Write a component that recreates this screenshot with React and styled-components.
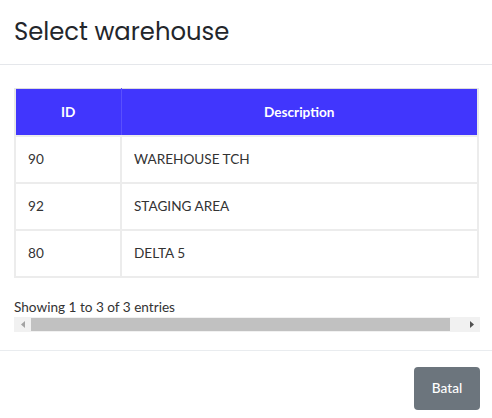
import React from "react";
import styled, { createGlobalStyle } from "styled-components";

const Global = createGlobalStyle`
  html, body { margin: 0; padding: 0; background: #fff; }
  body { font-family: Lato, "Liberation Sans", sans-serif; }
  * { box-sizing: border-box; }
`;

const Modal = styled.div`
  width: 492px;
  height: 418px;
  background: #fff;
  display: flex;
  flex-direction: column;
`;

const Header = styled.div`
  height: 65px;
  padding: 0 14px 2px;
  display: flex;
  align-items: center;
  border-bottom: 1px solid #e5e7eb;
`;

const Title = styled.h2`
  margin: 0;
  font-family: Poppins, Inter, "Open Sans", sans-serif;
  font-weight: 400;
  font-size: 24.3px;
  color: #23262b;
`;

const Body = styled.div`
  padding: 23px 13px 18px 14px;
  border-bottom: 1px solid #e9ecef;
`;

const Table = styled.table`
  width: 465px;
  border-collapse: collapse;
  border: 2px solid #e8e8e8;
  border-top: 1px solid #dcdcdc;
  font-size: 13.6px;
  color: #333;
`;

const Th = styled.th`
  background: #4136fd;
  color: #fff;
  font-weight: 700;
  height: 47px;
  padding: 0;
  text-align: center;
  border-left: 1px solid #5a50fd;
  &:first-child { border-left: none; width: 106px; }
`;

const Td = styled.td`
  height: 47px;
  padding: 0 12px;
  border: 2px solid #ececec;
  text-align: left;
`;

const Info = styled.div`
  margin-top: 21px;
  font-size: 13.6px;
  color: #333;
  line-height: 17px;
`;

const Scrollbar = styled.div`
  margin-top: 1px;
  width: 466px;
  height: 15px;
  background: #f1f1f1;
  display: flex;
  align-items: center;
`;

const Arrow = styled.div`
  width: 17px;
  height: 15px;
  display: flex;
  align-items: center;
  justify-content: center;
  color: ${(p) => (p.$active ? "#505050" : "#a3a3a3")};
`;

const Thumb = styled.div`
  flex: 1;
  height: 13px;
  background: #c1c1c1;
  margin-right: 13px;
`;

const Footer = styled.div`
  flex: 1;
  display: flex;
  justify-content: flex-end;
  align-items: flex-start;
  padding: 16px 12px 0 0;
`;

const Button = styled.button`
  width: 66px;
  height: 43px;
  border: none;
  border-radius: 4px;
  background: #6c757d;
  color: #fff;
  font-family: Lato, "Liberation Sans", sans-serif;
  font-size: 13.6px;
  font-weight: 500;
`;

const rows = [
  ["90", "WAREHOUSE TCH"],
  ["92", "STAGING AREA"],
  ["80", "DELTA 5"],
];

export default function App() {
  return (
    <>
      <Global />
      <Modal>
        <Header>
          <Title>Select warehouse</Title>
        </Header>
        <Body>
          <Table>
            <thead>
              <tr>
                <Th>ID</Th>
                <Th>Description</Th>
              </tr>
            </thead>
            <tbody>
              {rows.map(([id, d]) => (
                <tr key={id}>
                  <Td>{id}</Td>
                  <Td>{d}</Td>
                </tr>
              ))}
            </tbody>
          </Table>
          <Info>Showing 1 to 3 of 3 entries</Info>
          <Scrollbar>
            <Arrow>
              <svg width="4" height="7" viewBox="0 0 4 7"><path d="M4 0 L0 3.5 L4 7 Z" fill="currentColor" /></svg>
            </Arrow>
            <Thumb />
            <Arrow $active>
              <svg width="4" height="7" viewBox="0 0 4 7"><path d="M0 0 L4 3.5 L0 7 Z" fill="currentColor" /></svg>
            </Arrow>
          </Scrollbar>
        </Body>
        <Footer>
          <Button>Batal</Button>
        </Footer>
      </Modal>
    </>
  );
}
